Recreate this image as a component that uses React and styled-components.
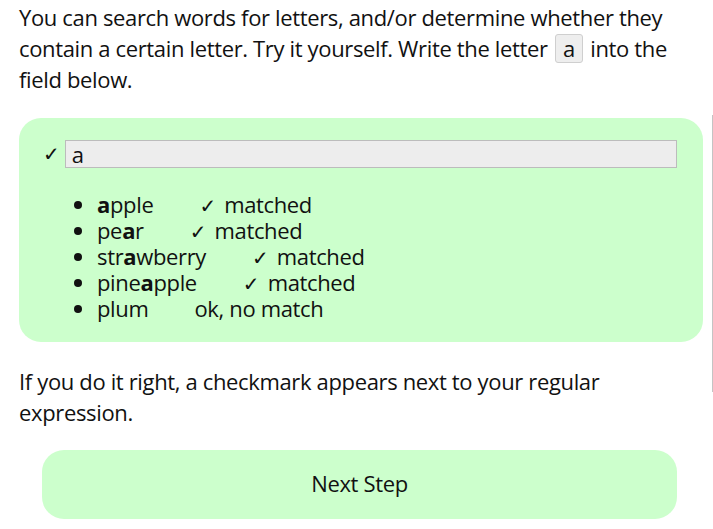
import React from "react";
import styled, { createGlobalStyle } from "styled-components";

const Global = createGlobalStyle`
  html, body { margin: 0; padding: 0; background: #fff; }
  body {
    font-family: "Open Sans", "DejaVu Sans", sans-serif;
    font-size: 22px;
    letter-spacing: -0.35px;
    color: #111;
  }
`;

const Page = styled.div`
  display: flex;
  align-items: flex-start;
  width: 713px;
`;

const Main = styled.div`
  width: 684px;
  padding: 2px 0 0 19px;
`;

const SideRule = styled.div`
  margin: 115px 0 0 9px;
  width: 1px;
  height: 277px;
  background: #c4c4c4;
`;

const Para = styled.p`
  margin: 0;
  line-height: 31px;
  width: 684px;
`;

const Code = styled.span`
  display: inline-block;
  line-height: 27px;
  padding: 0 7px;
  margin: 0 2px;
  background: #eeeeee;
  border: 1px solid #cfcfcf;
  border-radius: 3px;
`;

const Panel = styled.div`
  margin: 23px 0 24px;
  padding: 22px 26px 21px 24px;
  background: #ccffcc;
  border-radius: 22px;
`;

const InputRow = styled.div`
  display: flex;
  align-items: center;
  gap: 5px;
`;

const Mark = styled.span`
  font-family: "DejaVu Sans", sans-serif;
  font-size: 20px;
  letter-spacing: 0;
`;

const Field = styled.div`
  flex: 1;
  height: 26px;
  line-height: 26px;
  padding: 0 6px;
  background: #ededed;
  border: 1px solid #bcbcbc;
`;

const List = styled.ul`
  margin: 23px 0 0;
  padding-left: 54px;
  line-height: 26px;
`;

const Item = styled.li`
  padding: 0;
`;

const Hit = styled.b`
  font-weight: 700;
`;

const Status = styled.span`
  margin-left: 46px;
`;

const Tick = styled.span`
  font-family: "DejaVu Sans", sans-serif;
  font-size: 20px;
  letter-spacing: 0;
  line-height: 0;
  margin-right: 8px;
`;

const Button = styled.button`
  display: block;
  margin: 22px 0 0 23px;
  width: 635px;
  height: 69px;
  border: none;
  border-radius: 22px;
  background: #ccffcc;
  font-family: "Open Sans", sans-serif;
  font-size: 22px;
  letter-spacing: -0.35px;
  color: #111;
  padding: 0 0 4px;
`;

const words = [
  { pre: "", hit: "a", post: "pple", ok: true },
  { pre: "pe", hit: "a", post: "r", ok: true },
  { pre: "str", hit: "a", post: "wberry", ok: true },
  { pre: "pine", hit: "a", post: "pple", ok: true },
  { pre: "plum", hit: "", post: "", ok: false },
];

export default function App() {
  return (
    <>
      <Global />
      <Page>
        <Main>
          <Para>
            You can search words for letters, and/or determine whether they
            contain a certain letter. Try it yourself. Write the letter{" "}
            <Code>a</Code> into the field below.
          </Para>
          <Panel>
            <InputRow>
              <Mark>✓</Mark>
              <Field>a</Field>
            </InputRow>
            <List>
              {words.map((w, i) => (
                <Item key={i}>
                  {w.pre}
                  {w.hit && <Hit>{w.hit}</Hit>}
                  {w.post}
                  <Status>
                    {w.ok ? (
                      <>
                        <Tick>✓</Tick>matched
                      </>
                    ) : (
                      "ok, no match"
                    )}
                  </Status>
                </Item>
              ))}
            </List>
          </Panel>
          <Para>
            If you do it right, a checkmark appears next to your regular
            expression.
          </Para>
          <Button>Next Step</Button>
        </Main>
        <SideRule />
      </Page>
    </>
  );
}
